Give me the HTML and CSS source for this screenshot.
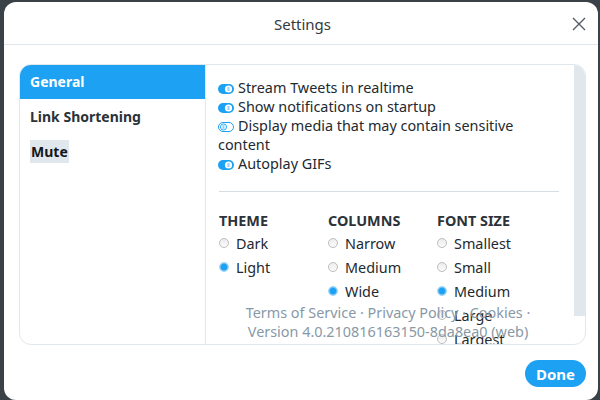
FILE: index.html
```html
<!DOCTYPE html>
<html>
<head>
<meta charset="utf-8">
<link rel="stylesheet" href="styles.css">
</head>
<body>
<div class="dialog">
  <div class="header">
    <span></span>
    <div class="title">Settings</div>
    <div class="close"><svg width="14" height="14" viewBox="0 0 14 14"><path d="M1 1L13 13M13 1L1 13" stroke="#555c63" stroke-width="1.4" fill="none"/></svg></div>
  </div>
  <div class="body">
    <div class="sidebar">
      <div class="nav active">General</div>
      <div class="nav">Link Shortening</div>
      <div class="nav"><span class="hl">Mute</span></div>
    </div>
    <div class="pane">
      <div class="content">
        <div class="toggles">
          <div class="tg"><svg class="sw" width="16" height="10" viewBox="0 0 16 10"><rect x="0" y="0" width="16" height="10" rx="5" fill="#1da1f2"/><circle cx="10.5" cy="5" r="3.6" fill="#fff"/><path d="M9.4 4H11.6M9.4 6H11.6" stroke="#1da1f2" stroke-width="0.9"/></svg>Stream Tweets in realtime</div>
          <div class="tg"><svg class="sw" width="16" height="10" viewBox="0 0 16 10"><rect x="0" y="0" width="16" height="10" rx="5" fill="#1da1f2"/><circle cx="10.5" cy="5" r="3.6" fill="#fff"/><path d="M9.4 4H11.6M9.4 6H11.6" stroke="#1da1f2" stroke-width="0.9"/></svg>Show notifications on startup</div>
          <div class="tg"><svg class="sw" width="16" height="10" viewBox="0 0 16 10"><rect x="0.5" y="0.5" width="15" height="9" rx="4.5" fill="#fff" stroke="#1da1f2"/><circle cx="5.5" cy="5" r="3.1" fill="#fff" stroke="#1da1f2" stroke-width="0.9"/><path d="M4.4 4H6.6M4.4 6H6.6" stroke="#1da1f2" stroke-width="0.9"/></svg>Display media that may contain sensitive content</div>
          <div class="tg"><svg class="sw" width="16" height="10" viewBox="0 0 16 10"><rect x="0" y="0" width="16" height="10" rx="5" fill="#1da1f2"/><circle cx="10.5" cy="5" r="3.6" fill="#fff"/><path d="M9.4 4H11.6M9.4 6H11.6" stroke="#1da1f2" stroke-width="0.9"/></svg>Autoplay GIFs</div>
        </div>
        <div class="rule"></div>
        <div class="groups">
          <div class="group">
            <div class="gh">THEME</div>
            <div class="opt"><span class="radio"></span>Dark</div>
            <div class="opt"><span class="radio on"></span>Light</div>
          </div>
          <div class="group">
            <div class="gh">COLUMNS</div>
            <div class="opt"><span class="radio"></span>Narrow</div>
            <div class="opt"><span class="radio"></span>Medium</div>
            <div class="opt"><span class="radio on"></span>Wide</div>
          </div>
          <div class="group">
            <div class="gh">FONT SIZE</div>
            <div class="opt"><span class="radio"></span>Smallest</div>
            <div class="opt"><span class="radio"></span>Small</div>
            <div class="opt"><span class="radio on"></span>Medium</div>
            <div class="opt"><span class="radio"></span>Large</div>
            <div class="opt"><span class="radio"></span>Largest</div>
          </div>
        </div>
        <div class="foot">
          <div>Terms of Service · Privacy Policy · Cookies ·</div>
          <div>Version 4.0.210816163150-8da8ea0 (web)</div>
        </div>
      </div>
      <div class="scroll"></div>
    </div>
  </div>
  <div class="actions">
    <button class="done">Done</button>
  </div>
</div>
</body>
</html>
```
FILE: styles.css
```css
html, body {
  margin: 0;
  padding: 0;
  background: #3a4147;
  overflow: hidden;
}
body {
  font-family: "Noto Sans", "Open Sans", sans-serif;
  font-size: 14px;
  color: #23292f;
}
.dialog {
  margin: 2px 0 0 4px;
  width: 594px;
  height: 398px;
  background: #fff;
  border-radius: 12px;
  display: flex;
  flex-direction: column;
}
.header {
  height: 42px;
  border-bottom: 1px solid #e1e8ed;
  display: grid;
  grid-template-columns: 1fr auto 1fr;
  align-items: center;
}
.title {
  font-size: 15px;
  color: #333a40;
  padding-top: 1px;
  padding-left: 3px;
}
.close {
  justify-self: end;
  margin-right: 12px;
  margin-top: 2px;
  display: flex;
}
.body {
  margin: 19px 12px 0 15px;
  height: 279px;
  border: 1px solid #e1e8ed;
  border-radius: 12px;
  display: flex;
  overflow: hidden;
}
.sidebar {
  width: 185px;
  border-right: 1px solid #e1e8ed;
  flex: none;
}
.nav {
  height: 35px;
  line-height: 35px;
  padding-left: 10px;
  font-weight: bold;
  font-size: 14px;
  color: #2b3238;
}
.nav.active {
  background: #1da1f2;
  color: #fff;
  height: 34px;
  line-height: 34px;
}
.hl {
  background: #e1e8ed;
  color: #14171a;
  padding: 2px 1px;
}
.pane {
  flex: 1;
  display: flex;
  min-width: 0;
}
.content {
  flex: 1;
  padding: 13px 15px 0 12px;
  overflow: hidden;
  font-size: 14.4px;
}
.scroll {
  width: 11px;
  height: 251px;
  background: #e1e8ed;
  flex: none;
}
.tg {
  line-height: 19px;
}
.sw {
  vertical-align: -1px;
  margin-right: 4px;
}
.rule {
  height: 1px;
  background: #d6dee4;
  margin: 18px 0 19px 1px;
}
.groups {
  display: grid;
  grid-template-columns: 109px 109px 109px;
  height: 92px;
  padding-left: 1px;
}
.gh {
  font-weight: bold;
  line-height: 19px;
  margin-bottom: 2px;
  color: #2b3238;
}
.opt {
  height: 24px;
  line-height: 24px;
  display: flex;
  align-items: center;
}
.radio {
  width: 10px;
  height: 10px;
  border-radius: 50%;
  box-sizing: border-box;
  border: 1px solid #bdbdbd;
  background: linear-gradient(#ececec, #fbfbfb);
  margin-right: 7px;
  margin-top: -3px;
  flex: none;
}
.radio.on {
  border-color: #9dd3f7;
  background: radial-gradient(circle, #1da1f2 0 2.8px, #6cc0f5 3.6px);
}
.foot {
  text-align: center;
  color: #8899a6;
  line-height: 19px;
  margin-left: -1px;
}
.actions {
  display: flex;
  justify-content: flex-end;
  margin: 15px 12px 0 0;
}
.done {
  font-family: inherit;
  font-size: 15px;
  font-weight: bold;
  color: #fff;
  background: #1da1f2;
  border: none;
  border-radius: 14px;
  width: 61px;
  height: 27px;
  padding: 0;
}
```
